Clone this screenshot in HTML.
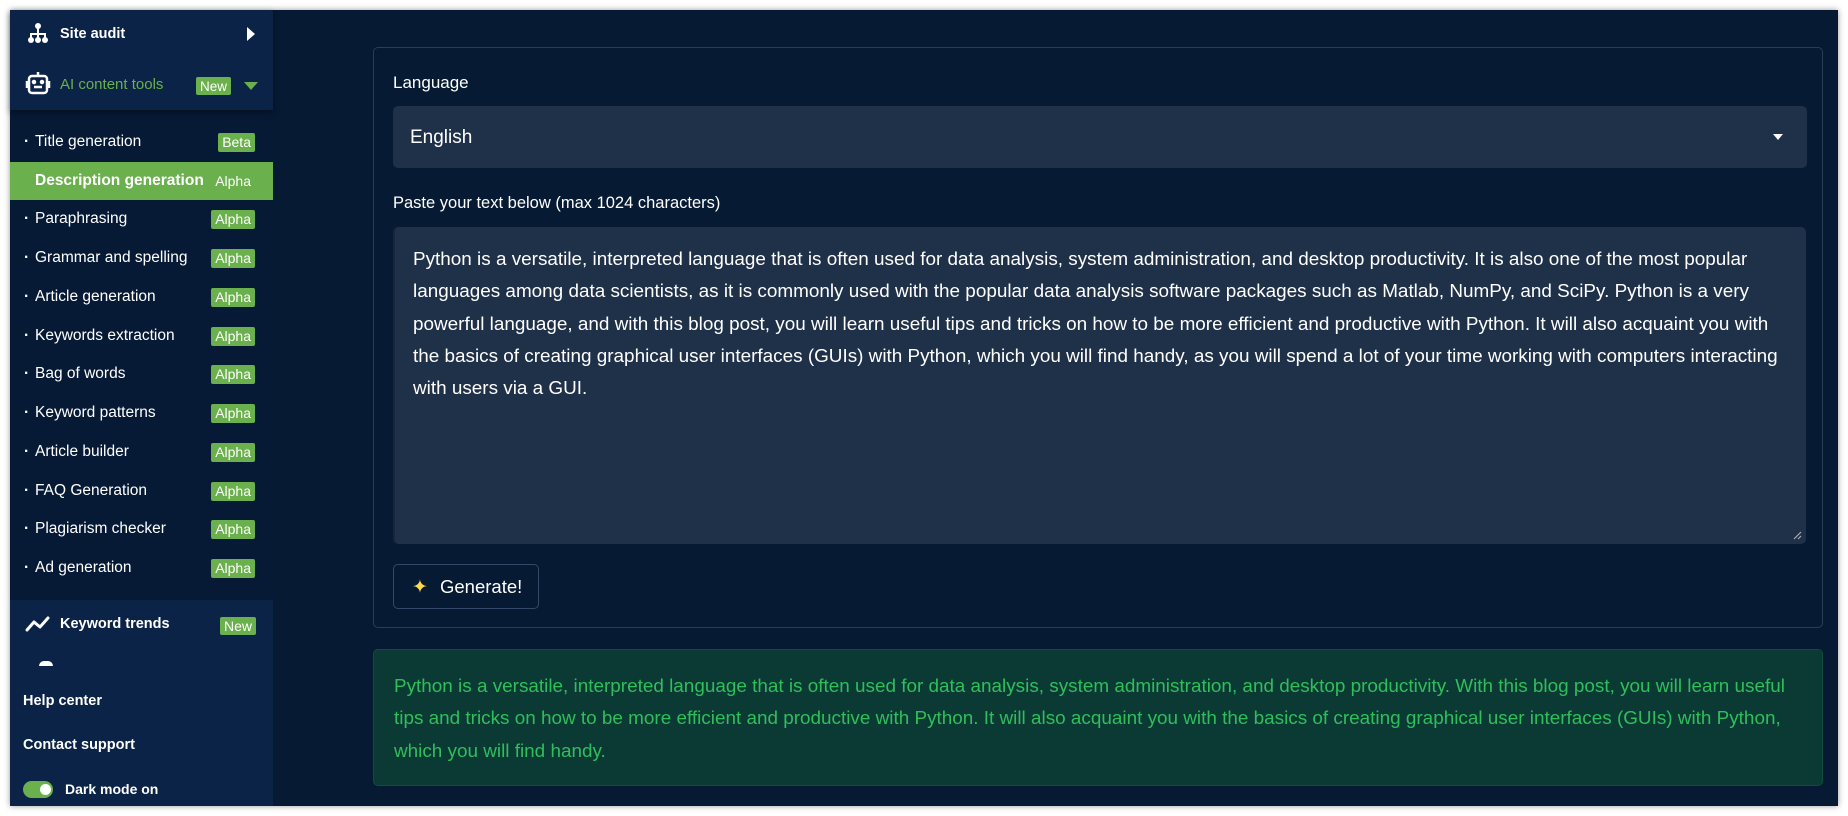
<!DOCTYPE html>
<html><head><style>
*{box-sizing:border-box;margin:0;padding:0}
body{width:1848px;height:816px;background:#fff;position:relative;overflow:hidden;font-family:"Liberation Sans",sans-serif}
#frame{position:absolute;left:10px;top:10px;width:1828px;height:796px;background:#061a33;box-shadow:0 0 6px rgba(0,0,0,.4)}
#side{position:absolute;left:10px;top:10px;width:263px;height:796px;background:#061a36}
.top{position:absolute;left:0;top:0;width:263px;height:100px;background:#0b2347;box-shadow:0 3px 6px rgba(0,0,0,.4)}
.bot{position:absolute;left:0;top:590px;width:263px;height:206px;background:#0b2347}
.t{position:absolute;color:#fff;font-size:14.5px;font-weight:bold}
.it{position:absolute;left:0;width:263px;height:38px;color:#fff;font-size:15.5px;line-height:38px}
.it .n{position:absolute;left:25px}
.it .d{position:absolute;left:14px;font-weight:bold}
.b{position:absolute;right:18px;top:10px;height:19px;line-height:19px;padding:0 4px;background:#6ab04c;color:#fff;font-size:14px;border-radius:2px;font-weight:normal}
.sel{background:#6ab04c;font-weight:bold}
.sel .b{background:none}
.txt{font-family:"Liberation Sans",sans-serif}
</style></head><body>
<div id="frame"></div>
<div id="side">
 <div class="top"></div>
 <svg style="position:absolute;left:17px;top:12px" width="22" height="22" viewBox="0 0 22 22" fill="#fff"><circle cx="11" cy="4" r="3"/><rect x="10" y="6" width="2" height="6"/><rect x="3" y="11" width="16" height="2"/><rect x="3" y="11" width="2" height="6"/><rect x="10" y="11" width="2" height="6"/><rect x="17" y="11" width="2" height="6"/><circle cx="4" cy="18" r="3"/><circle cx="11" cy="18" r="3"/><circle cx="18" cy="18" r="3"/></svg>
 <div class="t" style="left:50px;top:16px">Site audit</div>
 <svg style="position:absolute;left:236px;top:17px" width="10" height="14"><path d="M1 0L9 7L1 14Z" fill="#fff"/></svg>
 <svg style="position:absolute;left:14px;top:60px" width="28" height="28" viewBox="0 0 28 28" fill="none" stroke="#fff" stroke-width="2.5"><rect x="5" y="6" width="18" height="17" rx="3"/><path d="M10 17h8M14 2v4M3 11v7M25 11v7"/><circle cx="10" cy="12" r="1" fill="#fff"/><circle cx="18" cy="12" r="1" fill="#fff"/></svg>
 <div class="t" style="left:50px;top:66px;color:#6ab04c;font-weight:normal;font-size:15px">AI content tools</div>
 <div class="b" style="left:186px;right:auto;top:67px;height:18px;font-size:13.5px">New</div>
 <svg style="position:absolute;left:234px;top:72px" width="14" height="8"><path d="M0 0H14L7 8Z" fill="#6ab04c"/></svg>

 <div class="it" style="top:113px"><span class="d">·</span><span class="n">Title generation</span><span class="b">Beta</span></div>
 <div class="it sel" style="top:152px"><span class="n">Description generation</span><span class="b">Alpha</span></div>
 <div class="it" style="top:190px"><span class="d">·</span><span class="n">Paraphrasing</span><span class="b">Alpha</span></div>
 <div class="it" style="top:229px"><span class="d">·</span><span class="n">Grammar and spelling</span><span class="b">Alpha</span></div>
 <div class="it" style="top:268px"><span class="d">·</span><span class="n">Article generation</span><span class="b">Alpha</span></div>
 <div class="it" style="top:307px"><span class="d">·</span><span class="n">Keywords extraction</span><span class="b">Alpha</span></div>
 <div class="it" style="top:345px"><span class="d">·</span><span class="n">Bag of words</span><span class="b">Alpha</span></div>
 <div class="it" style="top:384px"><span class="d">·</span><span class="n">Keyword patterns</span><span class="b">Alpha</span></div>
 <div class="it" style="top:423px"><span class="d">·</span><span class="n">Article builder</span><span class="b">Alpha</span></div>
 <div class="it" style="top:462px"><span class="d">·</span><span class="n">FAQ Generation</span><span class="b">Alpha</span></div>
 <div class="it" style="top:500px"><span class="d">·</span><span class="n">Plagiarism checker</span><span class="b">Alpha</span></div>
 <div class="it" style="top:539px"><span class="d">·</span><span class="n">Ad generation</span><span class="b">Alpha</span></div>

 <div class="bot"></div>
 <svg style="position:absolute;left:15px;top:605px" width="26" height="18"><path d="M2 15L9 7L15 12L23 3" stroke="#fff" stroke-width="3" fill="none" stroke-linecap="round" stroke-linejoin="round"/></svg>
 <div class="t" style="left:50px;top:606px">Keyword trends</div>
 <div class="b" style="left:210px;right:auto;top:607px;height:18px">New</div>
 <div style="position:absolute;left:29px;top:651px;width:14px;height:5px;border-radius:7px 7px 0 0;background:#fff"></div>
 <div class="t" style="left:13px;top:683px">Help center</div>
 <div class="t" style="left:13px;top:727px">Contact support</div>
 <div style="position:absolute;left:13px;top:771px;width:30px;height:17px;border-radius:9px;background:#6ab04c"></div>
 <div style="position:absolute;left:30px;top:774px;width:11px;height:11px;border-radius:50%;background:#fff"></div>
 <div class="t" style="left:55px;top:771px;font-size:14px">Dark mode on</div>
</div>

<div style="position:absolute;left:373px;top:47px;width:1450px;height:581px;border:1px solid #2a3d58;border-radius:5px"></div>
<div class="txt" style="position:absolute;left:393px;top:73px;color:#fff;font-size:17px">Language</div>
<div style="position:absolute;left:393px;top:106px;width:1414px;height:62px;background:#1f3049;border-radius:5px"></div>
<div class="txt" style="position:absolute;left:410px;top:127px;color:#fff;font-size:19px">English</div>
<svg style="position:absolute;left:1773px;top:134px" width="10" height="6"><path d="M0 0H10L5 6Z" fill="#fff"/></svg>
<div class="txt" style="position:absolute;left:393px;top:194px;color:#fff;font-size:16.5px">Paste your text below (max 1024 characters)</div>
<div style="position:absolute;left:393px;top:227px;width:1413px;height:317px;background:#1f3049;border-radius:5px;border-left:2px solid #17253a"></div>
<div class="txt" style="position:absolute;left:413px;top:244px;color:#fff;font-size:18.9px;line-height:32.3px;white-space:nowrap">Python is a versatile, interpreted language that is often used for data analysis, system administration, and desktop productivity. It is also one of the most popular<br>languages among data scientists, as it is commonly used with the popular data analysis software packages such as Matlab, NumPy, and SciPy. Python is a very<br>powerful language, and with this blog post, you will learn useful tips and tricks on how to be more efficient and productive with Python. It will also acquaint you with<br>the basics of creating graphical user interfaces (GUIs) with Python, which you will find handy, as you will spend a lot of your time working with computers interacting<br>with users via a GUI.</div>
<svg style="position:absolute;left:1793px;top:531px" width="9" height="9"><path d="M1 8L8 1M5 8L8 5" stroke="#aab" stroke-width="1.2"/></svg>
<div style="position:absolute;left:393px;top:564px;width:146px;height:45px;border:1px solid #34496a;border-radius:5px"></div>
<div style="position:absolute;left:412px;top:576px;color:#ffd84a;font-size:19px">✦</div>
<div class="txt" style="position:absolute;left:440px;top:576px;color:#fff;font-size:18.5px">Generate!</div>

<div style="position:absolute;left:373px;top:649px;width:1450px;height:137px;background:#0b3a35;border:1px solid #124c40;border-radius:5px"></div>
<div class="txt" style="position:absolute;left:394px;top:671px;color:#2fbf5a;font-size:18.9px;line-height:32.3px;white-space:nowrap">Python is a versatile, interpreted language that is often used for data analysis, system administration, and desktop productivity. With this blog post, you will learn useful<br>tips and tricks on how to be more efficient and productive with Python. It will also acquaint you with the basics of creating graphical user interfaces (GUIs) with Python,<br>which you will find handy.</div>
</body></html>
